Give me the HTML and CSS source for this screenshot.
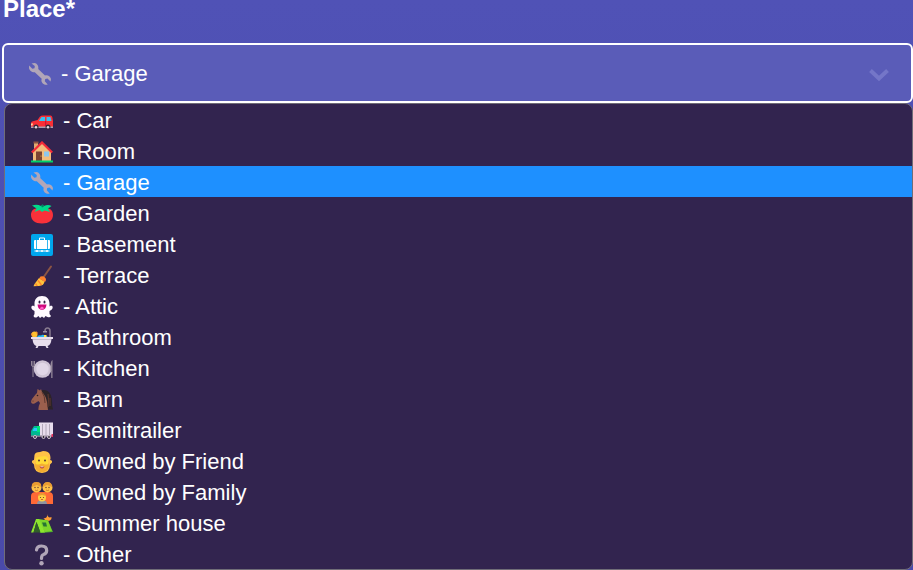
FILE: index.html
```html
<!DOCTYPE html>
<html lang="en">
<head>
<meta charset="utf-8">
<title>Place</title>
<link rel="stylesheet" href="styles.css">
</head>
<body>
<svg class="sprite" aria-hidden="true">
  <symbol id="wrench" viewBox="0 0 22 22">
    <path fill="#b1a6b8" d="M2.500 .5 5.500 0C8.500.5 9.800 3.200 9.200 6L16 12.500C18.700 11.800 21.400 13.400 22 16L21.500 18.500 18.500 15.600 16.200 16 15.800 18.200 18.700 21.500C15.500 22.400 12.400 20 12.400 17.200L12.700 15.700 5.800 9.200C3 9.500 .2 7.500 0 4.700L.2 2.500 3.300 5.800 5.500 5.200 5.800 3Z"/>
  </symbol>
  <symbol id="car" viewBox="0 0 22 22">
    <path fill="#f92f35" d="M1 11.500 6.500 10 9 6.500Q10 5.500 11.500 5.500H19.500Q21 5.500 21.300 7L22 11V17Q22 18 21 18H1Q0 18 0 17V13Q0 12 1 11.500Z"/>
    <path fill="#35c3f5" d="M8 10.500 10.500 7H14V11H8ZM15.500 7H19.500L20.500 11H15.500Z"/>
    <path fill="#a99daf" d="M0 16.500H22V18H0Z"/>
    <path fill="#ffdca0" d="M0 13.500H2L1.500 15.500H0Z"/>
    <path fill="#ca0b3a" d="M14.200 11H15.200V16H14.200Z"/>
    <circle cx="5" cy="17" r="2.500" fill="#302b38"/><circle cx="5" cy="17.200" r="1.300" fill="#e3d5e4"/>
    <circle cx="17" cy="17" r="2.500" fill="#302b38"/><circle cx="17" cy="17.200" r="1.300" fill="#e3d5e4"/>
  </symbol>
  <symbol id="house" viewBox="0 0 22 22">
    <path fill="#e0aa70" d="M3 2H7V9H3Z"/><path fill="#8c5543" d="M2.500 .5H7.500V2.500H2.500Z"/>
    <path fill="#f3bd7b" d="M11 2 20 11V20H2V11Z"/>
    <path fill="none" stroke="#f32b39" stroke-width="2.200" d="M.8 11.500 11 1.500 21.200 11.500"/>
    <path fill="#7d4533" d="M5 10.500H11V20H5Z"/><path fill="#8ec8ed" d="M13 10.500H18V15.500H13Z"/>
    <circle cx="10" cy="15" r=".6" fill="#f9c23c"/>
    <path fill="#00d26a" d="M0 19.500H22V21.500H0Z"/>
  </symbol>
  <symbol id="tomato" viewBox="0 0 22 22">
    <path fill="#f9313a" d="M11 6C18 4 22 7 22 12S18 20.500 11 20.500 0 17 0 12 4 4 11 6Z"/>
    <path fill="#00d98a" d="M1 2.500Q6 1 10 3L11.500 1.500 13 3Q17 1 20.500 3L17 5.500 19 9 13.500 7.500 11 9 8.500 7 3.500 9 5.500 5.500Z"/>
    <path fill="#008463" d="M10 2.500 12 1.500 13 3.500 11 4.500Z"/>
  </symbol>
  <symbol id="luggage" viewBox="0 0 22 22">
    <rect width="22" height="22" rx="2" fill="#00a6ed"/>
    <path fill="#fff" d="M4 6H5.200V15H4Q3 15 3 14V7Q3 6 4 6ZM6 6H16V15H6ZM16.800 6H18Q19 6 19 7V14Q19 15 18 15H16.800ZM3.500 16.500H18.500V17.500H3.500Z"/>
    <path fill="none" stroke="#fff" d="M8.500 6V4H13.500V6"/>
    <circle cx="6" cy="17" r="1" fill="#fff"/><circle cx="11" cy="17" r="1" fill="#fff"/><circle cx="16" cy="17" r="1" fill="#fff"/>
  </symbol>
  <symbol id="broom" viewBox="0 0 22 22">
    <path stroke="#8c5543" stroke-width="2" stroke-linecap="round" d="M20 1.500 12 13"/>
    <path fill="#ffc43c" d="M8 13 13.500 16.500Q13 20.500 8 21L2.500 21.200 3.500 19Z"/>
    <path fill="#ff822d" d="M9.500 11.500Q12 10.500 14 12.500T14 17L8 13.500ZM7.500 15 11 19.500 10 20.500 6.500 16ZM5 18 7 21H5.500L4 19Z"/>
  </symbol>
  <symbol id="ghost" viewBox="0 0 22 22">
    <path fill="#fffaff" d="M11 0C16 0 18.500 3.500 18.500 7.500V10.500L20 9.500Q22 9.500 21.700 12 21 14 18.500 15V18L20 20Q19 22 16.500 21L14.500 20 13 22 11 20.500 9 22 7.500 20 5.500 21.500Q3 22 2.500 20L3.500 18V15Q1 14 .3 12 0 9.500 2 9.500L3.500 10.500V7.500C3.500 3.500 6 0 11 0Z"/>
    <ellipse cx="8.500" cy="6" rx="1" ry="1.500" fill="#302044"/><ellipse cx="13.500" cy="6" rx="1" ry="1.500" fill="#302044"/>
    <path fill="#cf087c" d="M6.500 8.500H15.500Q15 13.500 11 14 7 13.500 6.500 8.500Z"/><path fill="#ff62c8" d="M9 12 11 10.500 13 12 12 13.500H9.500Z"/>
  </symbol>
  <symbol id="bath" viewBox="0 0 22 22">
    <path fill="none" stroke="#877a8e" stroke-width="1.500" d="M19 11V4Q19 1 16.500 1 14 1 14 4"/>
    <path fill="#998ea4" d="M12 4H16V5.500H12Z"/>
    <circle cx="3.500" cy="7.500" r="3" fill="#ffc02f"/><path fill="#ff942f" d="M-.5 6 2 7 1 9ZM5 4 7 6 5.500 7Z"/>
    <path fill="#26b7ed" d="M6 10Q7 7.500 10 8.500 12 7 14 9L18 10V12H5Z"/>
    <path fill="#ffe24a" d="M13 8H15.500V10H13Z"/>
    <path fill="#e8deed" d="M0 10H22V12H20.500Q20 18 16.500 19L17.500 21H15.500L14.500 19H7.500L6.500 21H4.500L5.500 19Q2 18 1.500 12H0Z"/>
    <path fill="#b9afbf" d="M2 12H20V12.700H2Z"/>
  </symbol>
  <symbol id="plate" viewBox="0 0 22 22">
    <circle cx="11.500" cy="11" r="8.800" fill="#cec3d5"/><circle cx="11.500" cy="11" r="6.200" fill="#e0d6e7"/>
    <path fill="none" stroke="#938799" d="M.5 3V7Q.5 8.500 2 8.500T3.500 7V3M2 3V19"/>
    <path fill="#938799" d="M21.500 2V20H20.200V13H19.500V7Q19.700 3 21.500 2Z"/>
  </symbol>
  <symbol id="horse" viewBox="0 0 22 22">
    <path fill="#2c2328" d="M8 2Q13 0 16.500 2 21 5 21 13 21 17 22 20.500H10Z"/>
    <path fill="#9b5f4d" d="M6 4 6.500 0 9 1.500 10 0 11 3Q15 7 16 13L17 21H7.500Q7 18 9 14L7.500 12 3.500 14.500Q1 15.500 .2 13.500 -.2 12 1 10L4.500 5.500Z"/>
    <path fill="none" stroke="#60392f" d="M11 3Q14 7 14 14M17 5Q18 10 17 18M19 9V17"/>
    <circle cx="6.500" cy="6.500" r=".8" fill="#281d20"/><circle cx="2" cy="12" r=".6" fill="#55302a"/>
  </symbol>
  <symbol id="truck" viewBox="0 0 22 22">
    <path fill="#e7dced" d="M8 2.500H22V17H8Z"/><path stroke="#b3a8ba" d="M11.500 4V15M15 4V15M18.500 4V15"/>
    <path fill="#00b890" d="M3 6H9V17H0V11Z"/><path fill="#28c8ff" d="M3 8H6V11H1.500Z"/>
    <path fill="#00e678" d="M6 6H9V12H6Z"/><path fill="#83788d" d="M0 15.500H22V17H0Z"/><path fill="#e6315c" d="M20.500 14H22V17H20.500Z"/>
    <g fill="#302b38" stroke="#d3c5d4"><circle cx="4" cy="17" r="1.500"/><circle cx="12.500" cy="17" r="1.500"/><circle cx="18" cy="17" r="1.500"/></g>
  </symbol>
  <symbol id="beard" viewBox="0 0 22 22">
    <path fill="#ffc247" d="M3.500 4Q4 1 9 1L12 0Q18 0 19 4T19 9Q21.500 9 21 11.500L19 13.500Q19 21.500 11 22 3 21.500 3 13.500L1 11.500Q.5 9 3 9Z"/>
    <path fill="#ffda38" d="M5 7Q8 5 11 5.500 15 4 17 7V15H5Z"/>
    <path fill="#f4ad32" d="M4 12Q5 14 8 13.500L11 12.500 14 13.500Q17 14 18 12 18.500 20.500 11 21.500 3.500 20.500 4 12Z"/>
    <circle cx="8" cy="9.500" r="1" fill="#5b3b36"/><circle cx="14" cy="9.500" r="1" fill="#5b3b36"/>
    <path fill="#b93b38" d="M8.500 15.500H13.500Q13 17.500 11 17.500T8.500 15.500Z"/><path fill="#fff" d="M9.500 15.500H12.500V16.200H9.500Z"/>
  </symbol>
  <symbol id="family" viewBox="0 0 22 22">
    <path fill="#ff6936" d="M0 22V14Q0 10 5 10H17Q22 10 22 14V22Z"/>
    <circle cx="5.500" cy="5.500" r="5" fill="#ffc247"/><circle cx="16.500" cy="5.500" r="5" fill="#ffc247"/>
    <path fill="#e99b32" d="M1 5Q0 0 5.500 0T10 5L6 3ZM12 5Q12 0 16.500 0T21 5L16 3Z"/>
    <g fill="#633c36"><circle cx="4" cy="5.500" r=".7"/><circle cx="7" cy="5.500" r=".7"/><circle cx="15" cy="5.500" r=".7"/><circle cx="18" cy="5.500" r=".7"/></g>
    <path fill="none" stroke="#b85b2c" stroke-width=".7" d="M4 8Q5.500 9 7 8M15 8Q16.500 9 18 8"/>
    <path fill="#8f949f" d="M6 22Q6 18 11 18T16 22Z"/><circle cx="11" cy="15.500" r="4" fill="#ffcf43"/>
    <path fill="#e99b32" d="M7 14Q8 11 11 11T15 14L11 13Z"/>
    <circle cx="9.500" cy="15.500" r=".6" fill="#633c36"/><circle cx="12.500" cy="15.500" r=".6" fill="#633c36"/><path stroke="#b82e39" stroke-width=".7" d="M10 17.500H12"/>
  </symbol>
  <symbol id="tent" viewBox="0 0 22 22">
    <path fill="#ff9f35" d="M16 1Q17 5 12.500 5.500 15 9 19 7.500 21 6.500 20.500 4 17 5.500 16 1Z"/>
    <path fill="#4caf2d" d="M6 6 17 7.500 22 19 9 20Z"/><path fill="#7ed52c" d="M6 6 17 7.500 21 18 14 19Z"/><path fill="#8de52e" d="M5 6 8 6 14 19.500H9.500L5.500 9 2.500 19.500H0Z"/>
    <path fill="#315f28" d="M5.500 9 9.500 19.500H2.500Z"/><path fill="#277534" d="M11 9.500H15L16 13.500H12.500Z"/>
  </symbol>
  <symbol id="question" viewBox="0 0 22 22">
    <path fill="none" stroke="#b1a6b8" stroke-width="3.200" stroke-linecap="round" d="M5.500 6Q6 2 10.500 2 15.700 2 15.700 6.500 15.700 9.500 12.500 10.500 10.500 11 10.500 14.500"/>
    <circle cx="10.500" cy="19.300" r="2.200" fill="#b1a6b8"/>
  </symbol>
</svg>
<main class="form">
  <label class="label" for="place">Place*</label>
  <div class="field">
    <select class="select" id="place">
      <option>- Car</option><option>- Room</option><option selected>- Garage</option><option>- Garden</option><option>- Basement</option><option>- Terrace</option><option>- Attic</option><option>- Bathroom</option><option>- Kitchen</option><option>- Barn</option><option>- Semitrailer</option><option>- Owned by Friend</option><option>- Owned by Family</option><option>- Summer house</option><option>- Other</option>
    </select>
    <svg class="icon field-icon" aria-hidden="true"><use href="#wrench"/></svg>
    <svg class="chevron" viewBox="0 0 20 14" aria-hidden="true"><path d="M1.500 2.500 10 10.500 18.500 2.500"/></svg>
  </div>
  <ul class="menu" role="listbox" aria-label="Place">
    <li class="option" role="option"><svg class="icon"><use href="#car"/></svg>- Car</li>
    <li class="option" role="option"><svg class="icon"><use href="#house"/></svg>- Room</li>
    <li class="option selected" role="option" aria-selected="true"><svg class="icon"><use href="#wrench"/></svg>- Garage</li>
    <li class="option" role="option"><svg class="icon"><use href="#tomato"/></svg>- Garden</li>
    <li class="option" role="option"><svg class="icon"><use href="#luggage"/></svg>- Basement</li>
    <li class="option" role="option"><svg class="icon"><use href="#broom"/></svg>- Terrace</li>
    <li class="option" role="option"><svg class="icon"><use href="#ghost"/></svg>- Attic</li>
    <li class="option" role="option"><svg class="icon"><use href="#bath"/></svg>- Bathroom</li>
    <li class="option" role="option"><svg class="icon"><use href="#plate"/></svg>- Kitchen</li>
    <li class="option" role="option"><svg class="icon"><use href="#horse"/></svg>- Barn</li>
    <li class="option" role="option"><svg class="icon"><use href="#truck"/></svg>- Semitrailer</li>
    <li class="option" role="option"><svg class="icon"><use href="#beard"/></svg>- Owned by Friend</li>
    <li class="option" role="option"><svg class="icon"><use href="#family"/></svg>- Owned by Family</li>
    <li class="option" role="option"><svg class="icon"><use href="#tent"/></svg>- Summer house</li>
    <li class="option" role="option"><svg class="icon"><use href="#question"/></svg>- Other</li>
  </ul>
</main>
</body>
</html>
```
FILE: styles.css
```css
* { box-sizing: border-box; }

body {
  margin: 0;
  min-height: 100vh;
  background: linear-gradient(#5052b6, #4a4aaa);
  color: #fff;
  font: 22px/31px "Liberation Sans", Arial, sans-serif;
}

.sprite { position: absolute; width: 0; height: 0; }

.form { padding-left: 2px; }

.label {
  display: block;
  height: 43px;
  padding-left: 1px;
  font-size: 24px;
  line-height: 18px;
  font-weight: bold;
}

.field { position: relative; }

.select {
  display: block;
  width: 100%;
  height: 60px;
  padding: 0 56px 0 57px;
  appearance: none;
  border: 2px solid #fff;
  border-radius: 6px;
  outline: 0;
  background: #5a5cb8;
  color: #fff;
  font: inherit;
}

.icon { flex: none; width: 22px; height: 22px; }

.field-icon {
  position: absolute;
  top: 20px;
  left: 27px;
  pointer-events: none;
}

.chevron {
  position: absolute;
  top: 25px;
  right: 24px;
  width: 20px;
  height: 14px;
  fill: none;
  stroke: #7476c8;
  stroke-width: 4px;
  pointer-events: none;
}

.menu {
  margin: 0 0 0 2px;
  padding: 0;
  list-style: none;
  overflow: hidden;
  background: #32244f;
  border: 1px solid #706d78;
  border-radius: 8px;
}

.option {
  display: flex;
  align-items: center;
  gap: 10px;
  height: 31px;
  padding: 2px 0 0 26px;
}

.selected { background: #1e90ff; }
```
